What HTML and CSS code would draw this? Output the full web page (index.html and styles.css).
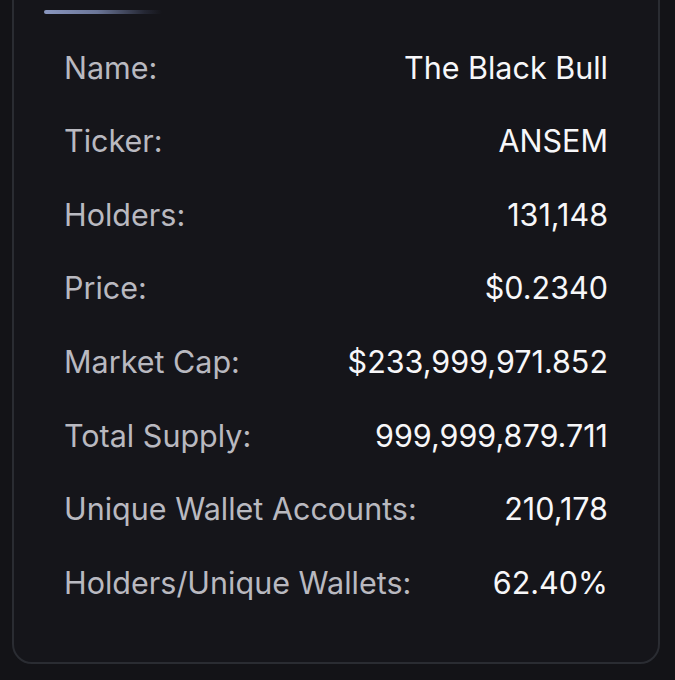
FILE: index.html
```html
<!DOCTYPE html>
<html>
<head>
<meta charset="utf-8">
<link rel="stylesheet" href="styles.css">
</head>
<body>
<div class="card">
  <div class="accent"></div>
  <dl class="rows">
    <div class="row"><dt>Name:</dt><dd>The Black Bull</dd></div>
    <div class="row"><dt>Ticker:</dt><dd>ANSEM</dd></div>
    <div class="row"><dt>Holders:</dt><dd>131,148</dd></div>
    <div class="row"><dt>Price:</dt><dd>$0.2340</dd></div>
    <div class="row"><dt>Market Cap:</dt><dd>$233,999,971.852</dd></div>
    <div class="row"><dt>Total Supply:</dt><dd>999,999,879.711</dd></div>
    <div class="row"><dt>Unique Wallet Accounts:</dt><dd>210,178</dd></div>
    <div class="row"><dt>Holders/Unique Wallets:</dt><dd>62.40%</dd></div>
  </dl>
</div>
</body>
</html>
```
FILE: styles.css
```css
html, body {
  margin: 0;
  padding: 0;
  background: #131317;
  height: 680px;
  overflow: hidden;
}
body {
  font-family: Inter, "Noto Sans", sans-serif;
  padding: 0 15px 0 12px;
}
.card {
  margin-top: -40px;
  height: 704px;
  box-sizing: border-box;
  background: #15151a;
  border: 2px solid #2a2c32;
  border-radius: 20px;
  padding: 48px 50px 0 30px;
}
.accent {
  height: 4px;
  width: 118px;
  border-radius: 2px;
  background: linear-gradient(90deg, #8a97c0 0%, #6b7698 45%, rgba(60,66,90,0.4) 85%, rgba(40,44,60,0) 100%);
}
.rows {
  margin: 17px 0 0 20px;
  padding: 0;
}
.row {
  display: flex;
  justify-content: space-between;
  align-items: center;
  height: 73.6px;
  font-size: 30.5px;
  line-height: 1;
}
dt {
  color: #b9b9c0;
}
dd {
  margin: 0;
  color: #f7f7f9;
}
```
